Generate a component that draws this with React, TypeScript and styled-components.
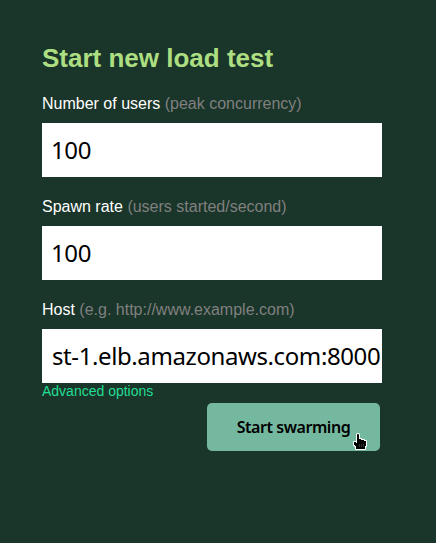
import React from 'react';
import styled, { createGlobalStyle } from 'styled-components';

const GlobalStyle = createGlobalStyle`
  * { box-sizing: border-box; }
  body { margin: 0; background: #1a3529; }
`;

const Page = styled.main`
  min-height: 543px;
  padding: 42px 54px 0 42px;
  background: #1a3529;
  color: #fff;
  font-family: "Liberation Sans", Arial, sans-serif;
`;

const Title = styled.h2`
  margin: 0 0 20px;
  height: 32px;
  line-height: 32px;
  font-size: 26px;
  font-weight: 700;
  color: #addf82;
`;

const Form = styled.form`
  display: flex;
  flex-direction: column;
`;

const Field = styled.div<{ $last?: boolean }>`
  display: flex;
  flex-direction: column;
  gap: 10px;
  margin-bottom: ${(p) => (p.$last ? 0 : 20)}px;
`;

const Label = styled.label`
  height: 19px;
  line-height: 19px;
  font-size: 16px;
  white-space: nowrap;
`;

const Hint = styled.span`
  color: #808080;
`;

const Input = styled.input<{ $numeric: boolean }>`
  width: 340px;
  height: 54px;
  padding: 0 0 2px ${(p) => (p.$numeric ? 9 : 10)}px;
  border: 0;
  border-radius: 0;
  outline: 0;
  background: #fff;
  color: #000;
  font-family: "Noto Sans", sans-serif;
  font-size: 24px;
  font-weight: 400;
  letter-spacing: -0.4px;
`;

const AdvancedLink = styled.a`
  align-self: flex-start;
  height: 20px;
  line-height: 17px;
  font-size: 14px;
  color: #24dd96;
  text-decoration: none;
`;

const SubmitButton = styled.button`
  position: relative;
  align-self: flex-end;
  width: 173px;
  height: 48px;
  margin-right: 2px;
  padding: 0;
  border: 0;
  border-radius: 5px;
  background: #74b99f;
  color: #000;
  font-family: "Noto Sans", sans-serif;
  font-size: 16px;
  font-weight: 600;
  letter-spacing: -0.45px;
  cursor: pointer;
`;

const Pointer = styled.svg`
  position: absolute;
  left: 145px;
  top: 29px;
`;

const fields = [
  { id: 'users', label: 'Number of users', hint: '(peak concurrency)', value: '100', numeric: true },
  { id: 'rate', label: 'Spawn rate', hint: '(users started/second)', value: '100', numeric: true },
  { id: 'host', label: 'Host', hint: '(e.g. http://www.example.com)', value: 'st-1.elb.amazonaws.com:8000', numeric: false },
];

export default function App() {
  return (
    <>
      <GlobalStyle />
      <Page>
        <Title>Start new load test</Title>
        <Form onSubmit={(e) => e.preventDefault()}>
          {fields.map((f, i) => (
            <Field key={f.id} $last={i === fields.length - 1}>
              <Label htmlFor={f.id}>
                {f.label} <Hint>{f.hint}</Hint>
              </Label>
              <Input id={f.id} defaultValue={f.value} $numeric={f.numeric} spellCheck={false} />
            </Field>
          ))}
          <AdvancedLink href="#">Advanced options</AdvancedLink>
          <SubmitButton type="submit">
            Start swarming
            <Pointer width="16" height="20" viewBox="0 0 16 20" aria-hidden="true">
              <path
                d="M5 3Q5 2 6 2T7 3V7H9V8H12V9H14V14H13V17H4V14H3V13H2V10H4V11H5Z"
                fill="#000"
                stroke="#fff"
                strokeWidth="2"
                strokeLinejoin="round"
                paintOrder="stroke"
              />
              <path d="M7.5 12V15M9.5 12V15M11.5 12V15" stroke="#444" strokeWidth="0.7" />
            </Pointer>
          </SubmitButton>
        </Form>
      </Page>
    </>
  );
}
